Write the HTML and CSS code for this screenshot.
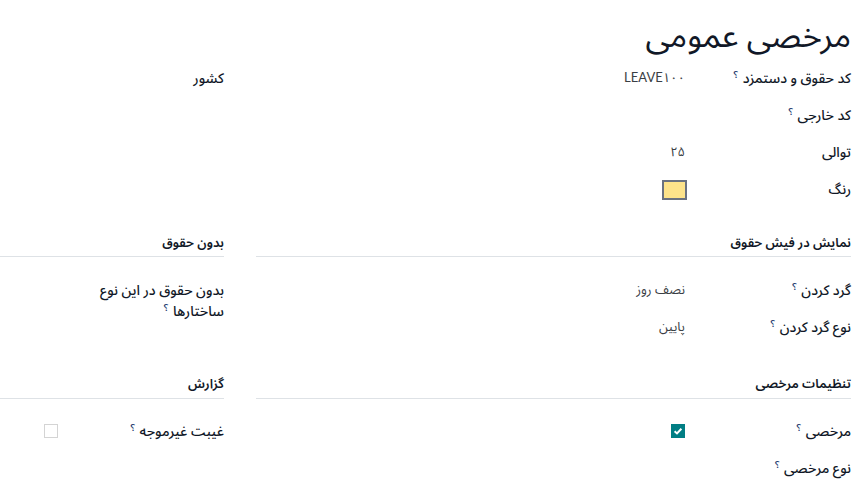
FILE: index.html
```html
<!DOCTYPE html>
<html lang="fa" dir="rtl">
<head>
<meta charset="utf-8">
<title>مرخصی عمومی</title>
<link rel="stylesheet" href="styles.css">
</head>
<body>
<div class="sheet">
  <h1 class="title">مرخصی عمومی</h1>
  <div class="form-grid">
    <div class="group">
      <div class="row"><div class="label">کد حقوق و دستمزد <sup class="help">؟</sup></div><div class="value">LEAVE۱۰۰</div></div>
      <div class="row"><div class="label">کد خارجی <sup class="help">؟</sup></div><div class="value"></div></div>
      <div class="row"><div class="label">توالی</div><div class="value">۲۵</div></div>
      <div class="row"><div class="label">رنگ</div><div class="value"><span class="swatch"></span></div></div>
    </div>
    <div class="group">
      <div class="row"><div class="label">کشور</div><div class="value"></div></div>
    </div>

    <div class="group section">
      <div class="sep">نمایش در فیش حقوق</div>
      <div class="row"><div class="label">گرد کردن <sup class="help">؟</sup></div><div class="value">نصف روز</div></div>
      <div class="row"><div class="label">نوع گرد کردن <sup class="help">؟</sup></div><div class="value">پایین</div></div>
    </div>
    <div class="group section">
      <div class="sep">بدون حقوق</div>
      <div class="row"><div class="label">بدون حقوق در این نوع ساختارها <sup class="help">؟</sup></div><div class="value"></div></div>
    </div>

    <div class="group section section-last">
      <div class="sep">تنظیمات مرخصی</div>
      <div class="row"><div class="label">مرخصی <sup class="help">؟</sup></div><div class="value"><span class="check on"><svg viewBox="0 0 14 14" width="14" height="14"><path d="M3.6 7.2 L6 9.4 L10.4 4.8" fill="none" stroke="#fff" stroke-width="2"/></svg></span></div></div>
      <div class="row"><div class="label">نوع مرخصی <sup class="help">؟</sup></div><div class="value"></div></div>
    </div>
    <div class="group section section-last">
      <div class="sep">گزارش</div>
      <div class="row"><div class="label">غیبت غیرموجه <sup class="help">؟</sup></div><div class="value"><span class="check"></span></div></div>
    </div>
  </div>
</div>
</body>
</html>
```

FILE: styles.css
```css
html, body {
  margin: 0;
  padding: 0;
  background: #fff;
}
body {
  direction: rtl;
  font-family: Lato, "Noto Sans Arabic", "Noto Sans Arabic UI", "Noto Naskh Arabic", "DejaVu Sans", sans-serif;
  font-size: 14px;
  color: #1f2328;
  overflow: hidden;
}
.sheet {
  padding-right: 12px;
  width: 851px;
}
.title {
  margin: 0;
  padding-top: 12px;
  height: 47px;
  font-size: 33px;
  line-height: 44px;
  font-weight: 400;
  color: #111827;
}
.form-grid {
  display: grid;
  grid-template-columns: 595px 224px;
  column-gap: 32px;
}
.row {
  display: grid;
  grid-template-columns: 166px 1fr;
  min-height: 37px;
}
.label {
  padding: 8px 0 8px 16px;
  line-height: 21px;
  font-weight: 500;
  color: #111827;
}
.value {
  padding: 8px 0;
  line-height: 21px;
  font-size: 13px;
  color: #3a3e44;
}
.help {
  font-size: 10px;
  line-height: 0;
  color: #1d3a6e;
  vertical-align: baseline;
  position: relative;
  top: -0.5em;
  margin-right: 1px;
}
.sep {
  padding-top: 24px;
  padding-bottom: 3px;
  line-height: 21px;
  font-size: 13px;
  font-weight: 600;
  color: #111827;
  border-bottom: 1px solid #dee2e6;
  margin-bottom: 14px;
}
.section-last .sep {
  padding-top: 28px;
  padding-bottom: 4px;
  margin-bottom: 13px;
}
.swatch {
  display: inline-block;
  width: 21px;
  height: 16px;
  background: #fde38a;
  border: 2px solid #6b7280;
  vertical-align: middle;
  margin-top: 1px;
  margin-right: -2px;
}
.check {
  display: inline-block;
  width: 12px;
  height: 12px;
  border: 1px solid #d4d4d4;
  background: #fff;
  vertical-align: middle;
  margin-top: -2px;
}
.check.on {
  width: 14px;
  height: 14px;
  border: 0;
  background: #017e84;
}
.check svg {
  display: block;
}
```
